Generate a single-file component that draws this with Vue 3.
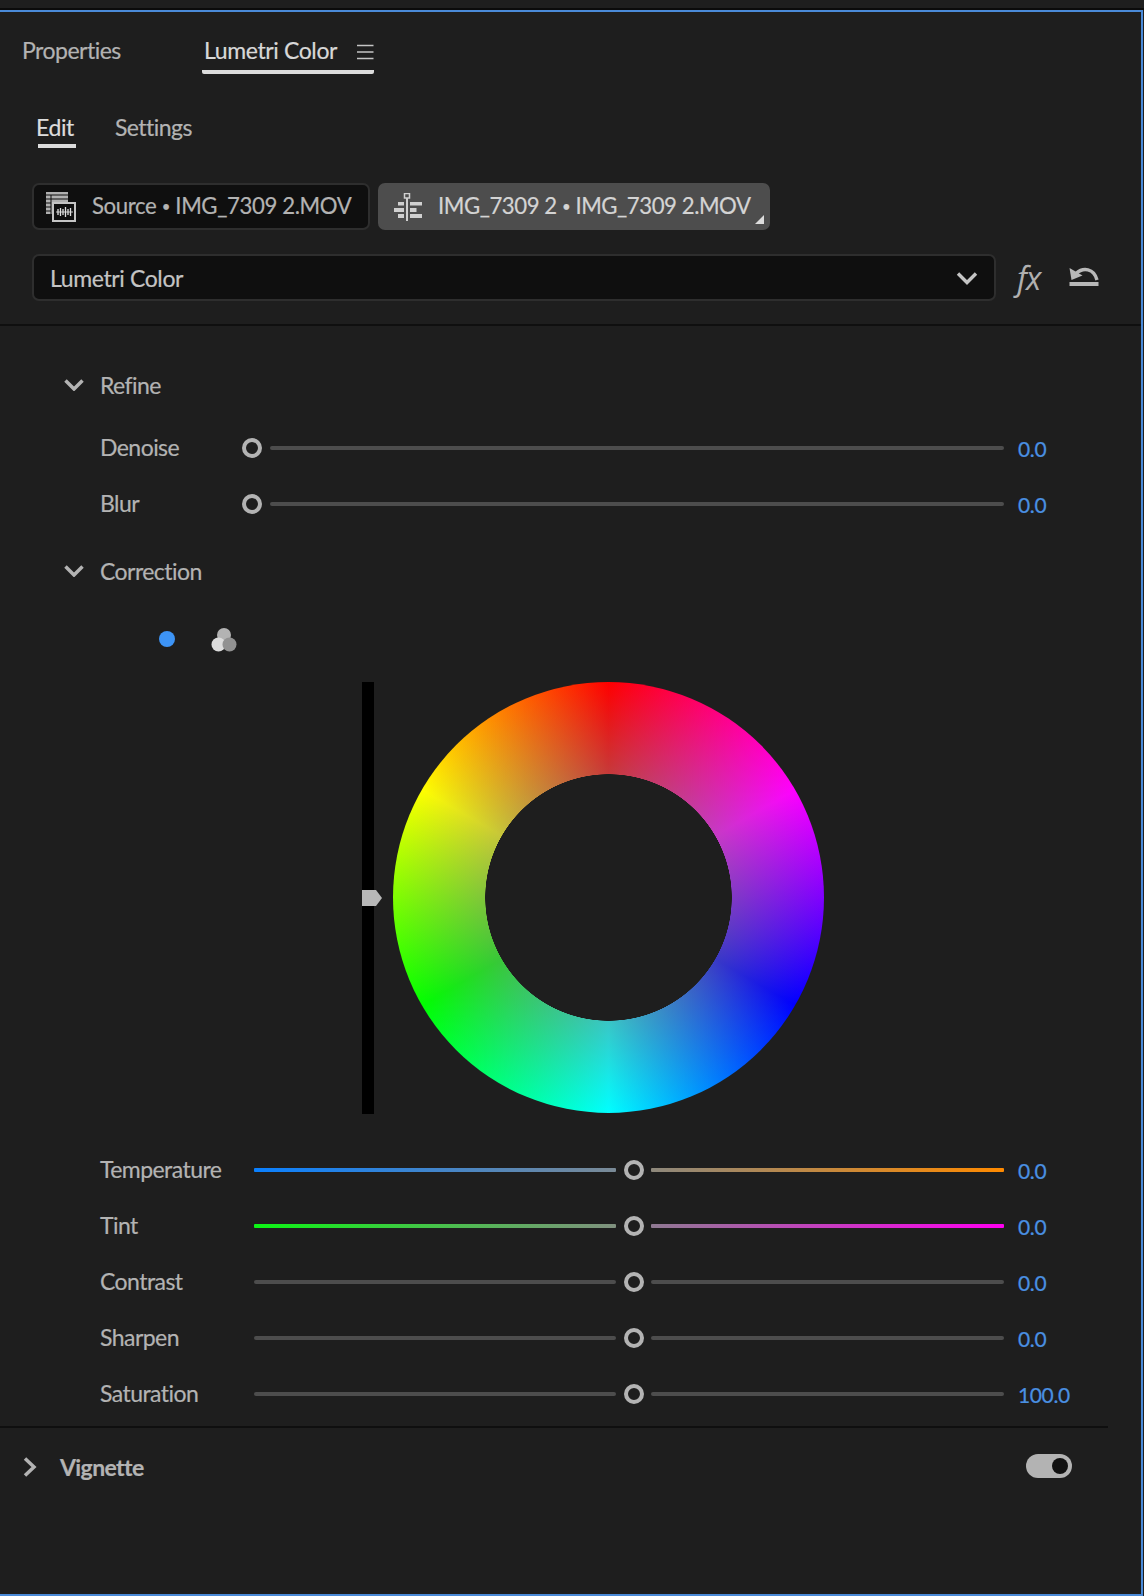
<script setup>
const refineRows = [
  { label: 'Denoise', value: '0.0' },
  { label: 'Blur', value: '0.0' },
]
const colorRows = [
  { label: 'Temperature', value: '0.0', left: 'temp-l', right: 'temp-r' },
  { label: 'Tint', value: '0.0', left: 'tint-l', right: 'tint-r' },
  { label: 'Contrast', value: '0.0', left: 'plain', right: 'plain' },
  { label: 'Sharpen', value: '0.0', left: 'plain', right: 'plain' },
  { label: 'Saturation', value: '100.0', left: 'plain', right: 'plain' },
]
const waveBars = [
  [12, 3], [14.500, 4], [17, 3], [19.500, 5], [22, 3], [24.500, 4],
]
</script>

<template>
  <div class="page">
    <div class="strip"></div>
    <div class="frame">
      <div class="tabs">
        <span class="tab">Properties</span>
        <div class="tab-active">
          <span class="tab-on">Lumetri Color</span>
          <svg class="menu" width="17" height="16" viewBox="0 0 17 16">
            <path d="M0 1.500h16.500M0 8h16.500M0 14.500h16.500" stroke="#c4c4c4" stroke-width="1.600" fill="none" />
          </svg>
        </div>
      </div>

      <div class="subtabs">
        <span class="sub-on">Edit</span>
        <span class="sub">Settings</span>
      </div>

      <div class="chips">
        <div class="chip chip-source">
          <svg width="30" height="30" viewBox="0 0 30 30">
            <rect x="0" y="0" width="22" height="22" fill="#b0b0b0" />
            <path d="M0 3h22M0 7h5M0 11h5M0 15h5M0 19h5M5 3v19M5 7h17" stroke="#0f0f0f" stroke-width="1" fill="none" />
            <rect x="7" y="11" width="22" height="18" fill="#0f0f0f" stroke="#c4c4c4" stroke-width="2" />
            <path d="M10 20h17" stroke="#c4c4c4" stroke-width="1" />
            <path v-for="(b, i) in waveBars" :key="i" :d="`M${b[0]} ${20 - b[1]}v${b[1] * 2}`" stroke="#e0e0e0" stroke-width="1.300" />
          </svg>
          <span class="chip-text">Source <span class="bul">•</span> IMG_7309 2.MOV</span>
        </div>
        <div class="chip chip-seq">
          <svg width="28" height="28" viewBox="0 0 28 28">
            <rect x="10.500" y="0.500" width="5" height="4.500" fill="none" stroke="#d0d0d0" stroke-width="1.500" />
            <rect x="12" y="5" width="2" height="23" fill="#d0d0d0" />
            <path d="M4 9h6v3.500H4zM16 9h12v3.500H16zM0 15h10v4H0zM16 15h6.500v4H16zM4 21h6v4H4zM16 21h12v4H16z" fill="#d0d0d0" />
          </svg>
          <span class="chip-text light">IMG_7309 2 <span class="bul">•</span> IMG_7309 2.MOV</span>
          <span class="corner"></span>
        </div>
      </div>

      <div class="select-row">
        <div class="select">
          <span class="select-text">Lumetri Color</span>
          <svg width="22" height="14" viewBox="0 0 22 14">
            <path d="M2 2.500l9 9 9-9" fill="none" stroke="#c4c4c4" stroke-width="3.400" />
          </svg>
        </div>
        <span class="fx">fx</span>
        <svg class="undo" width="30" height="20" viewBox="0 0 30 20">
          <path d="M0.500 1l2 12 11-4.500z" fill="#b8b8b8" />
          <path d="M7 6.500C14 0 25 1 28 13" fill="none" stroke="#b8b8b8" stroke-width="3.400" />
          <rect x="0.500" y="15" width="29" height="4" fill="#b8b8b8" />
        </svg>
      </div>

      <div class="rule"></div>

      <div class="head first">
        <svg width="20" height="12" viewBox="0 0 20 12">
          <path d="M1.500 1.500L10 10l8.500-8.500" fill="none" stroke="#b3b3b3" stroke-width="3.500" />
        </svg>
        <span class="label">Refine</span>
      </div>
      <div v-for="row in refineRows" :key="row.label" class="row">
        <span class="row-label short">{{ row.label }}</span>
        <span class="thumb"></span>
        <span class="track plain grow"></span>
        <span class="value">{{ row.value }}</span>
      </div>

      <div class="head second">
        <svg width="20" height="12" viewBox="0 0 20 12">
          <path d="M1.500 1.500L10 10l8.500-8.500" fill="none" stroke="#b3b3b3" stroke-width="3.500" />
        </svg>
        <span class="label">Correction</span>
      </div>

      <div class="modes">
        <span class="dot"></span>
        <svg width="26" height="25" viewBox="0 0 26 25">
          <circle cx="13" cy="8" r="7" fill="#b3b3b3" />
          <circle cx="7.500" cy="17.500" r="7" fill="#dcdcdc" />
          <circle cx="18.500" cy="17.500" r="7" fill="#919191" />
        </svg>
      </div>

      <div class="wheel-block">
        <div class="lum">
          <svg class="lum-thumb" width="20" height="16" viewBox="0 0 20 16">
            <path d="M0 0h14l6 8-6 8H0z" fill="#b8b8b8" />
          </svg>
        </div>
        <div class="wheel"></div>
      </div>

      <div class="color-rows">
        <div v-for="row in colorRows" :key="row.label" class="row">
          <span class="row-label">{{ row.label }}</span>
          <span class="track left" :class="row.left"></span>
          <span class="thumb mid"></span>
          <span class="track right" :class="row.right"></span>
          <span class="value">{{ row.value }}</span>
        </div>
      </div>

      <div class="rule-short"></div>

      <div class="vignette">
        <svg width="14" height="20" viewBox="0 0 14 20">
          <path d="M2 1.500L11 10l-9 8.500" fill="none" stroke="#b3b3b3" stroke-width="3.500" />
        </svg>
        <span class="vig-label">Vignette</span>
        <span class="toggle"><span class="knob"></span></span>
      </div>
    </div>
  </div>
</template>

<style>
html, body { margin: 0; background: #1e1e1e; }
</style>

<style scoped>
.page {
  width: 1144px;
  height: 1596px;
  background: #1e1e1e;
  font-family: Lato, "Open Sans", sans-serif;
  color: #b3b3b3;
  font-size: 23px;
  letter-spacing: -0.38px;
  white-space: nowrap;
  -webkit-text-stroke: 0.2px currentColor;
  overflow: hidden;
}
.strip {
  height: 8px;
  border-bottom: 2px solid #0b0b0b;
}
.frame {
  box-sizing: border-box;
  height: 1586px;
  margin-right: 1px;
  border-top: 2px solid #4a8ad8;
  border-right: 2px solid #4a8ad8;
  border-bottom: 2px solid #4a8ad8;
}
.tabs {
  display: flex;
  height: 62px;
  padding-left: 22px;
}
.tab {
  width: 180px;
  line-height: 76px;
  height: 58px;
  letter-spacing: -0.5px;
}
.tab-active {
  box-sizing: border-box;
  width: 172px;
  height: 62px;
  display: flex;
  padding-left: 2px;
  border-bottom: 4px solid #dcdcdc;
  border-radius: 0 0 2px 2px;
}
.tab-on {
  flex: none;
  width: 133px;
  color: #d8d8d8;
  line-height: 76px;
  height: 58px;
}
.menu {
  flex: none;
  margin: 32px 0 0 20px;
}
.subtabs {
  display: flex;
  height: 74px;
  padding-left: 38px;
}
.sub-on {
  box-sizing: border-box;
  width: 38px;
  height: 74px;
  line-height: 106px;
  text-indent: -2px;
  color: #dcdcdc;
  border-bottom: 4px solid #dcdcdc;
}
.sub {
  margin-left: 39px;
  line-height: 106px;
  height: 74px;
  letter-spacing: -0.55px;
}
.chips {
  display: flex;
  gap: 8px;
  height: 47px;
  margin: 35px 0 0 32px;
}
.chip {
  box-sizing: border-box;
  position: relative;
  display: flex;
  align-items: center;
  height: 47px;
  border-radius: 7px;
}
.chip-source {
  width: 338px;
  padding-left: 12px;
  background: #0f0f0f;
  border: 2px solid #2e2e2e;
}
.chip-seq {
  width: 392px;
  padding-left: 16px;
  background: #4d4d4d;
}
.chip-text {
  margin-left: 16px;
  margin-top: -2px;
  font-size: 22.2px;
}
.chip-text.light {
  color: #d4d4d4;
  letter-spacing: -0.45px;
}
.bul {
  font-size: 15px;
  position: relative;
  top: -2px;
}
.corner {
  position: absolute;
  right: 6px;
  bottom: 6px;
  width: 0;
  height: 0;
  border-left: 9px solid transparent;
  border-bottom: 9px solid #dcdcdc;
}
.select-row {
  display: flex;
  align-items: center;
  margin: 24px 0 0 32px;
  height: 47px;
}
.select {
  box-sizing: border-box;
  width: 964px;
  height: 47px;
  display: flex;
  align-items: center;
  justify-content: space-between;
  padding: 0 16px 0 16px;
  background: #0f0f0f;
  border: 2px solid #2e2e2e;
  border-radius: 7px;
}
.select-text {
  color: #c4c4c4;
}
.fx {
  width: 31px;
  margin-left: 21px;
  font-family: "Open Sans", sans-serif;
  font-style: italic;
  font-weight: 400;
  font-size: 32px;
  letter-spacing: -1px;
  -webkit-text-stroke: 0;
  color: #b0b0b0;
  line-height: 40px;
}
.undo {
  margin-left: 21px;
  margin-top: -2px;
}
.rule {
  height: 2px;
  margin-top: 23px;
  background: #0f0f0f;
}
.head {
  display: flex;
  align-items: center;
  height: 56px;
  padding-left: 64px;
}
.head.first {
  margin-top: 31px;
  margin-bottom: 7px;
}
.head.second {
  margin-top: 11px;
}
.label {
  margin-left: 16px;
  letter-spacing: -0.55px;
}
.row {
  display: flex;
  align-items: center;
  height: 56px;
  padding-left: 100px;
}
.row-label {
  width: 154px;
  flex: none;
  margin-top: -2px;
  letter-spacing: -0.55px;
}
.row-label.short {
  width: 142px;
}
.thumb {
  box-sizing: border-box;
  flex: none;
  width: 20px;
  height: 20px;
  border: 4.500px solid #b3b3b3;
  border-radius: 50%;
}
.thumb.mid {
  margin: 0 7px 0 8px;
}
.track {
  height: 4px;
  border-radius: 1px;
}
.track.grow {
  width: 734px;
  margin-left: 8px;
}
.track.left {
  width: 362px;
}
.track.right {
  width: 353px;
}
.plain {
  background: #4d4d4d;
  border-radius: 2px;
}
.temp-l { background: linear-gradient(90deg, #0a80ff, #7a8a96); }
.temp-r { background: linear-gradient(90deg, #8d887c, #ff8a00); }
.tint-l { background: linear-gradient(90deg, #0cf514, #80907f); }
.tint-r { background: linear-gradient(90deg, #8f7a92, #ff00f0); }
.value {
  margin-left: 14px;
  font-size: 21px;
  color: #4a90e2;
  position: relative;
  top: 0;
}
.modes {
  display: flex;
  align-items: center;
  height: 40px;
  margin-top: 20px;
  padding-left: 159px;
  gap: 36px;
}
.dot {
  width: 16px;
  height: 16px;
  border-radius: 50%;
  background: #3d94f6;
}
.wheel-block {
  display: flex;
  gap: 19px;
  height: 432px;
  margin-top: 23px;
  padding-left: 362px;
}
.lum {
  position: relative;
  width: 12px;
  height: 432px;
  background: #000;
}
.lum-thumb {
  position: absolute;
  left: 0;
  top: 208px;
}
.wheel {
  width: 431px;
  height: 431px;
  border-radius: 50%;
  background:
    radial-gradient(circle closest-side, #1e1e1e 0, #1e1e1e 123px, rgba(128, 128, 128, 0.45) 123.500px, rgba(128, 128, 128, 0) 100%),
    conic-gradient(#f00, #f0f, #00f, #0ff, #0f0, #ff0, #f00);
}
.color-rows {
  margin-top: 28px;
}
.rule-short {
  width: 1108px;
  height: 2px;
  margin-top: 4px;
  background: #0f0f0f;
}
.vignette {
  display: flex;
  align-items: center;
  height: 78px;
  padding-left: 23px;
}
.vig-label {
  margin-left: 23px;
  font-weight: 700;
  width: 90px;
  letter-spacing: -0.6px;
}
.toggle {
  position: relative;
  width: 46px;
  height: 24px;
  margin-left: 876px;
  margin-top: -2px;
  background: #b3b3b3;
  border-radius: 12px;
}
.knob {
  position: absolute;
  right: 4px;
  top: 4px;
  width: 16px;
  height: 16px;
  border-radius: 50%;
  background: #111;
}
</style>
